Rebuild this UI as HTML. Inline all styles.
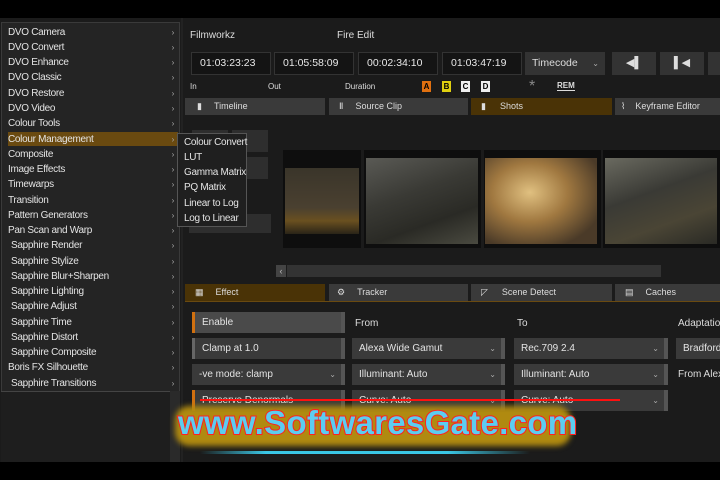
<!DOCTYPE html>
<html><head><meta charset="utf-8"><style>
*{margin:0;padding:0;box-sizing:border-box}
body{width:720px;height:480px;background:#1b1b1b;font-family:"Liberation Sans",sans-serif;color:#ddd;position:relative;overflow:hidden;font-size:10px}
.a{position:absolute}
.mi{position:absolute;left:8px;font-size:10px;letter-spacing:-0.3px;color:#e4e4e4;height:15px;line-height:15px;width:170px;white-space:nowrap}
.mi span{position:absolute;right:4px;font-size:8px;color:#aaa}
.tc{position:absolute;top:52px;height:23px;background:#141414;border:1px solid #333;font-size:10.5px;line-height:21px;padding-left:8px;color:#e8e8e8}
.tab{position:absolute;height:17px;background:#3a3a3a;font-size:9px;line-height:17px;color:#ddd;white-space:nowrap;overflow:hidden}
.fld{position:absolute;height:21px;background:#3a3a3a;border-right:4px solid #555;font-size:10px;line-height:21px;padding-left:7px;color:#e4e4e4;white-space:nowrap}
.fld i{position:absolute;right:5px;font-style:normal;font-size:8px;color:#aaa}
.lbl{position:absolute;font-size:10px;color:#ddd;white-space:nowrap}
</style></head><body>
<div class="a" style="left:0;top:0;width:720px;height:18px;background:#000"></div>
<div class="a" style="left:0;top:462px;width:720px;height:18px;background:#000"></div>
<div class="a" style="left:181px;top:18px;width:2px;height:444px;background:#222"></div>

<div class="lbl" style="left:190px;top:30px">Filmworkz</div>
<div class="lbl" style="left:337px;top:30px">Fire Edit</div>
<div class="tc" style="left:191px;width:80px">01:03:23:23</div>
<div class="tc" style="left:274px;width:80px">01:05:58:09</div>
<div class="tc" style="left:358px;width:80px">00:02:34:10</div>
<div class="tc" style="left:442px;width:80px">01:03:47:19</div>
<div class="a" style="left:525px;top:52px;width:80px;height:23px;background:#333;font-size:10.5px;line-height:23px;padding-left:7px">Timecode<span style="position:absolute;right:6px;font-size:8px;color:#aaa">⌄</span></div>
<div class="a" style="left:612px;top:52px;width:44px;height:23px;background:#333;text-align:center;line-height:23px;font-size:11px">◀▌</div>
<div class="a" style="left:660px;top:52px;width:44px;height:23px;background:#333;text-align:center;line-height:23px;font-size:11px">▌◀</div>
<div class="a" style="left:708px;top:52px;width:14px;height:23px;background:#333"></div>
<div class="lbl" style="left:190px;top:82px;font-size:8px">In</div>
<div class="lbl" style="left:268px;top:82px;font-size:8px">Out</div>
<div class="lbl" style="left:345px;top:82px;font-size:8px">Duration</div>
<div class="a" style="left:422px;top:81px;width:9px;height:11px;background:#e07010;color:#000;font-size:8px;text-align:center;font-weight:bold;line-height:11px">A</div>
<div class="a" style="left:442px;top:81px;width:9px;height:11px;background:#e0d010;color:#000;font-size:8px;text-align:center;font-weight:bold;line-height:11px">B</div>
<div class="a" style="left:461px;top:81px;width:9px;height:11px;background:#eee;color:#000;font-size:8px;text-align:center;font-weight:bold;line-height:11px">C</div>
<div class="a" style="left:481px;top:81px;width:9px;height:11px;background:#eee;color:#000;font-size:8px;text-align:center;font-weight:bold;line-height:11px">D</div>
<div class="lbl" style="left:529px;top:78px;font-size:16px;color:#888">*</div>
<div class="lbl" style="left:557px;top:81px;font-size:8px;font-weight:bold;border-bottom:1px solid #ddd">REM</div>

<div class="tab" style="left:185px;top:98px;width:140px"><span style="margin-left:12px">▮</span><span style="margin-left:12px">Timeline</span></div>
<div class="tab" style="left:329px;top:98px;width:139px"><span style="margin-left:10px">Ⅱ</span><span style="margin-left:12px">Source Clip</span></div>
<div class="tab" style="left:471px;top:98px;width:141px;background:#4a3306"><span style="margin-left:10px">▮</span><span style="margin-left:14px">Shots</span></div>
<div class="tab" style="left:615px;top:98px;width:110px"><span style="margin-left:6px">⌇</span><span style="margin-left:10px">Keyframe Editor</span></div>

<div class="a" style="left:192px;top:130px;width:36px;height:22px;background:#2e2e2e"></div>
<div class="a" style="left:232px;top:130px;width:36px;height:22px;background:#2e2e2e"></div>
<div class="a" style="left:192px;top:157px;width:36px;height:22px;background:#2e2e2e"></div>
<div class="a" style="left:232px;top:157px;width:36px;height:22px;background:#2e2e2e"></div>
<div class="a" style="left:189px;top:214px;width:82px;height:19px;background:#2e2e2e"></div>

<div class="a" style="left:283px;top:150px;width:78px;height:98px;background:#0e0e0e"></div>
<div class="a" style="left:285px;top:168px;width:74px;height:66px;background:linear-gradient(180deg,#3a352a,#4a4030 60%,#6a5020 80%,#2a2418)"></div>
<div class="a" style="left:364px;top:150px;width:117px;height:98px;background:#0e0e0e"></div>
<div class="a" style="left:366px;top:158px;width:112px;height:86px;background:linear-gradient(160deg,#5a5a55,#3a3a35 40%,#2a2a25 70%,#4a4a40)"></div>
<div class="a" style="left:484px;top:150px;width:117px;height:98px;background:#0e0e0e"></div>
<div class="a" style="left:485px;top:158px;width:112px;height:86px;background:radial-gradient(ellipse at 40% 40%,#e0c080,#a07840 40%,#4a3a28 80%)"></div>
<div class="a" style="left:603px;top:150px;width:117px;height:98px;background:#0e0e0e"></div>
<div class="a" style="left:605px;top:158px;width:112px;height:86px;background:linear-gradient(160deg,#6a6a60,#3a3a35 40%,#4a4535 70%,#2a2a25)"></div>

<div class="a" style="left:276px;top:265px;width:10px;height:12px;background:#444;font-size:9px;color:#bbb;line-height:12px;text-align:center">‹</div>
<div class="a" style="left:287px;top:265px;width:374px;height:12px;background:#333"></div>

<div class="tab" style="left:185px;top:284px;width:140px;background:#4a3306"><span style="margin-left:10px">▦</span><span style="margin-left:12px">Effect</span></div>
<div class="tab" style="left:329px;top:284px;width:139px"><span style="margin-left:8px">⚙</span><span style="margin-left:12px">Tracker</span></div>
<div class="tab" style="left:471px;top:284px;width:141px"><span style="margin-left:10px">◸</span><span style="margin-left:14px">Scene Detect</span></div>
<div class="tab" style="left:615px;top:284px;width:110px"><span style="margin-left:10px">▤</span><span style="margin-left:12px">Caches</span></div>
<div class="a" style="left:185px;top:301px;width:535px;height:1px;background:#6a4a10"></div>

<div class="fld" style="left:192px;top:312px;width:153px;background:#4a4a4a;border-left:3px solid #d07010">Enable</div>
<div class="fld" style="left:192px;top:338px;width:153px;border-left:3px solid #666">Clamp at 1.0</div>
<div class="fld" style="left:192px;top:364px;width:153px">-ve mode: clamp<i>⌄</i></div>
<div class="fld" style="left:192px;top:390px;width:153px;border-left:3px solid #d07010">Preserve Denormals</div>
<div class="lbl" style="left:355px;top:318px">From</div>
<div class="lbl" style="left:517px;top:318px">To</div>
<div class="lbl" style="left:678px;top:318px">Adaptation</div>
<div class="fld" style="left:352px;top:338px;width:153px">Alexa Wide Gamut<i>⌄</i></div>
<div class="fld" style="left:352px;top:364px;width:153px">Illuminant: Auto<i>⌄</i></div>
<div class="fld" style="left:352px;top:390px;width:153px">Curve: Auto<i>⌄</i></div>
<div class="fld" style="left:514px;top:338px;width:154px">Rec.709 2.4<i>⌄</i></div>
<div class="fld" style="left:514px;top:364px;width:154px">Illuminant: Auto<i>⌄</i></div>
<div class="fld" style="left:514px;top:390px;width:154px">Curve: Auto<i>⌄</i></div>
<div class="fld" style="left:676px;top:338px;width:50px;border:none">Bradford</div>
<div class="lbl" style="left:678px;top:369px">From Alexa</div>
<div class="a" style="left:200px;top:399px;width:420px;height:2px;background:#ff1010"></div>

<div class="a" style="left:1px;top:22px;width:179px;height:370px;background:#242424;border:1px solid #3a3a3a"></div>
<div class="a" style="left:1px;top:391px;width:169px;height:71px;background:#1e1e1e;border-top:1px solid #444"></div>
<div class="a" style="left:170px;top:391px;width:10px;height:71px;background:#2a2a2a"></div>
<div class="a" style="left:8px;top:132px;width:170px;height:14px;background:#6a4a10"></div>
<div class="mi" style="top:25px">DVO Camera<span>›</span></div>
<div class="mi" style="top:40px">DVO Convert<span>›</span></div>
<div class="mi" style="top:55px">DVO Enhance<span>›</span></div>
<div class="mi" style="top:70px">DVO Classic<span>›</span></div>
<div class="mi" style="top:86px">DVO Restore<span>›</span></div>
<div class="mi" style="top:101px">DVO Video<span>›</span></div>
<div class="mi" style="top:116px">Colour Tools<span>›</span></div>
<div class="mi" style="top:132px">Colour Management<span>›</span></div>
<div class="mi" style="top:147px">Composite<span>›</span></div>
<div class="mi" style="top:162px">Image Effects<span>›</span></div>
<div class="mi" style="top:177px">Timewarps<span>›</span></div>
<div class="mi" style="top:193px">Transition<span>›</span></div>
<div class="mi" style="top:208px">Pattern Generators<span>›</span></div>
<div class="mi" style="top:223px">Pan Scan and Warp<span>›</span></div>
<div class="mi" style="top:238px;left:11px;width:167px">Sapphire Render<span>›</span></div>
<div class="mi" style="top:254px;left:11px;width:167px">Sapphire Stylize<span>›</span></div>
<div class="mi" style="top:269px;left:11px;width:167px">Sapphire Blur+Sharpen<span>›</span></div>
<div class="mi" style="top:284px;left:11px;width:167px">Sapphire Lighting<span>›</span></div>
<div class="mi" style="top:299px;left:11px;width:167px">Sapphire Adjust<span>›</span></div>
<div class="mi" style="top:315px;left:11px;width:167px">Sapphire Time<span>›</span></div>
<div class="mi" style="top:330px;left:11px;width:167px">Sapphire Distort<span>›</span></div>
<div class="mi" style="top:345px;left:11px;width:167px">Sapphire Composite<span>›</span></div>
<div class="mi" style="top:360px">Boris FX Silhouette<span>›</span></div>
<div class="mi" style="top:376px;left:11px;width:167px">Sapphire Transitions<span>›</span></div>

<div class="a" style="left:177px;top:133px;width:70px;height:94px;background:#1f1f1f;border:1px solid #555"></div>
<div class="mi" style="left:184px;top:135px;width:60px">Colour Convert</div>
<div class="mi" style="left:184px;top:150px;width:60px">LUT</div>
<div class="mi" style="left:184px;top:165px;width:60px">Gamma Matrix</div>
<div class="mi" style="left:184px;top:180px;width:60px">PQ Matrix</div>
<div class="mi" style="left:184px;top:196px;width:60px">Linear to Log</div>
<div class="mi" style="left:184px;top:211px;width:60px">Log to Linear</div>

<div class="a" style="left:200px;top:451px;width:330px;height:3px;background:linear-gradient(90deg,transparent,#3ac8e8 20%,#3ac8e8 75%,transparent)"></div>
<div class="a" style="left:175px;top:406px;width:396px;height:40px;border-radius:14px;background:#b08a10;filter:blur(3px)"></div>
<div class="a" style="left:178px;top:404px;font-size:33px;font-weight:bold;color:#5ccdf0;-webkit-text-stroke:2px #ff2020;paint-order:stroke fill;letter-spacing:0.3px;white-space:nowrap">www.SoftwaresGate.com</div>
</body></html>
